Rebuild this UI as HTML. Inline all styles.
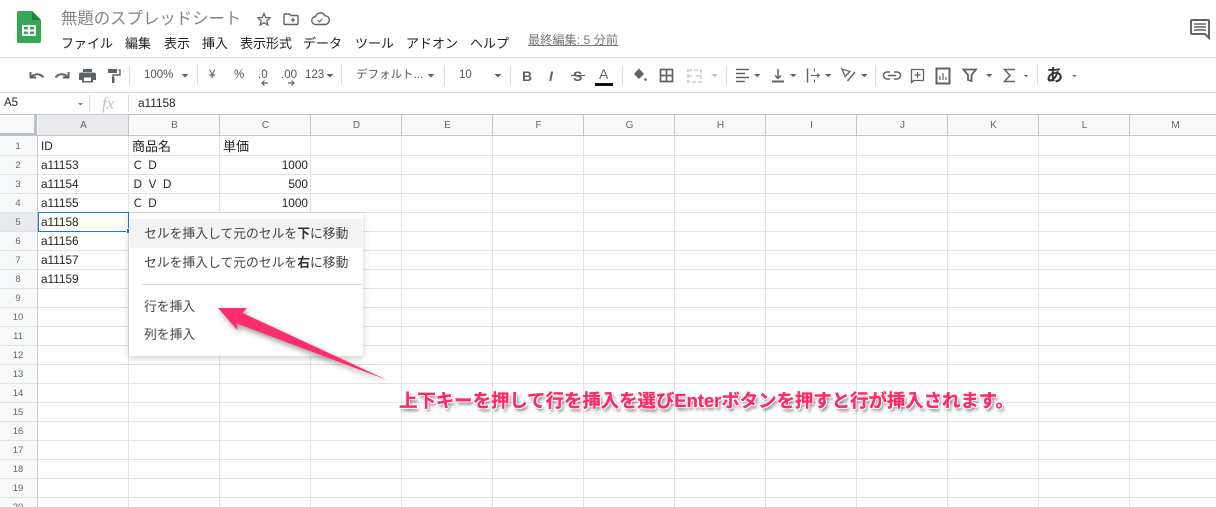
<!DOCTYPE html>
<html lang="ja"><head><meta charset="utf-8"><title>無題のスプレッドシート</title>
<style>
html,body{margin:0;padding:0;background:#fff}
#p{position:relative;width:1216px;height:507px;overflow:hidden;background:#fff;font-family:"Liberation Sans","Noto Sans CJK JP",sans-serif;color:#222}
#p div.t{position:absolute;white-space:nowrap;line-height:1}
svg{position:absolute;left:0;top:0}
.m{font-size:13px;color:#222;top:37px}
.c{font-size:11.8px;color:#222}
.h{font-size:10px;color:#666;width:91px;text-align:center;top:121px}
.r{font-size:9.5px;color:#666;width:36px;left:0;text-align:center}
.tb{font-size:11.5px;color:#555;top:70px}
.mi{font-size:12.8px;color:#444;left:144px}
.mi b{color:#333}
.w{font-size:11.5px !important}
</style></head><body><div id="p">

<svg width="1216" height="507" viewBox="0 0 1216 507" fill="none">
<rect x="0" y="115" width="1216" height="21" fill="#f8f9fa"/>
<rect x="0" y="136" width="37" height="371" fill="#f8f9fa"/>
<rect x="38" y="115" width="90" height="21" fill="#e8eaed"/>
<rect x="0" y="213" width="37" height="18" fill="#e8eaed"/>
<g stroke="#e2e3e3" stroke-width="1">
<path d="M0 155.5H1216M0 174.5H1216M0 193.5H1216M0 212.500H1216M0 231.500H1216M0 250.500H1216M0 269.500H1216M0 288.500H1216M0 307.500H1216M0 326.500H1216M0 345.500H1216M0 364.500H1216M0 383.500H1216M0 402.500H1216M0 421.500H1216M0 440.500H1216M0 459.500H1216M0 478.500H1216M0 497.500H1216"/>
<path d="M128.500 136V507M219.500 136V507M310.500 136V507M401.500 136V507M492.500 136V507M583.500 136V507M674.500 136V507M765.500 136V507M856.500 136V507M947.500 136V507M1038.500 136V507M1129.500 136V507"/>
</g>
<g stroke="#c4c6c8" stroke-width="1">
<path d="M0 114.500H1216M37.500 136V507"/>
<path d="M128.500 115V136M219.500 115V136M310.500 115V136M401.500 115V136M492.500 115V136M583.500 115V136M674.500 115V136M765.500 115V136M856.500 115V136M947.500 115V136M1038.500 115V136M1129.500 115V136"/>
<path d="M0 135.500H1216"/>
</g>
<rect x="34" y="115" width="3" height="21" fill="#bdc1c6"/>
<rect x="0" y="133" width="37" height="3" fill="#bdc1c6"/>
<path d="M0 57.500H1216M0 92.500H1216" stroke="#dadce0"/>
<g stroke="#dadce0"><path d="M129.500 65V85M197.500 65V85M341.500 65V85M444.500 65V85M510.500 65V85M622.500 65V85M726.500 65V85M875.500 65V85M1037.500 65V85M89.500 95V112M128.500 95V112"/></g>
<!-- logo -->
<path d="M18.500 11H32L41 20V41.500a1.500 1.500 0 0 1-1.500 1.500H18.500A1.500 1.500 0 0 1 17 41.500V12.500A1.500 1.500 0 0 1 18.500 11Z" fill="#34a853"/>
<path d="M32 11L41 20H32Z" fill="#1e7e3e"/>
<path d="M22 25H36V36H22ZM24 27V29.500H28V27ZM30 27V29.500H34V27ZM24 31.500V34H28V31.500ZM30 31.500V34H34V31.500Z" fill="#fff" fill-rule="evenodd"/>
<!-- star folder cloud -->
<path d="M264 13.500l1.800 4 4.300.4-3.300 2.900 1 4.200-3.800-2.300-3.800 2.300 1-4.200-3.300-2.900 4.300-.4Z" stroke="#5f6368" stroke-width="1.300"/>
<path d="M285 14h4.500l1.500 1.500h6a1 1 0 0 1 1 1v7a1 1 0 0 1-1 1h-12a1 1 0 0 1-1-1v-8.500a1 1 0 0 1 1-1Z" stroke="#5f6368" stroke-width="1.400"/>
<path d="M291 20h4M293 18v4" stroke="#5f6368" stroke-width="1.300"/>
<path d="M316 24.500a4 4 0 0 1-.5-8 5 5 0 0 1 9.300-.8 4.400 4.400 0 0 1 .2 8.800Z" stroke="#5f6368" stroke-width="1.400"/>
<path d="M317.500 20l2 1.800 2.700-3" stroke="#5f6368" stroke-width="1.100"/>
<!-- comments -->
<path d="M1192 20h16a1 1 0 0 1 1 1v17l-4-4h-13a1 1 0 0 1-1-1V21a1 1 0 0 1 1-1Z" stroke="#5f6368" stroke-width="2"/>
<path d="M1194 24h12M1194 27h12M1194 30h12" stroke="#5f6368" stroke-width="1.500"/>
<!-- undo redo print paint -->
<path d="M30.500 72v5.500H36M31.500 77c3-3.500 8.500-4 12 .5" stroke="#5f6368" stroke-width="2"/>
<path d="M68.500 72v5.500H63M67.500 77c-3-3.500-8.500-4-12 .5" stroke="#5f6368" stroke-width="2"/>
<path d="M83 69h9v3h-9ZM81 72.500h13a2 2 0 0 1 2 2V80h-3v2.500H82V80h-3v-5.500a2 2 0 0 1 2-2Z" fill="#5f6368"/>
<rect x="84" y="77.500" width="7" height="3.500" fill="#fff"/>
<path d="M108 69h9v4h-9ZM112 77h2.500v6H112Z" fill="#5f6368"/>
<path d="M118.500 70h1.500v5h-7v3" stroke="#5f6368" stroke-width="1.400"/>
<!-- carets -->
<g fill="#5f6368">
<path d="M181.500 74h7l-3.500 3.500ZM326.500 74h7l-3.500 3.500ZM427.500 74h7l-3.500 3.500ZM494.500 74h7l-3.500 3.500ZM754 74h6.500l-3.200 3.200ZM790 74h6.500l-3.200 3.200ZM825 74h6.500l-3.200 3.200ZM861 74h6.500l-3.200 3.200ZM986 74h6.500l-3.200 3.200ZM1024 75h4l-2 2.200ZM1072.500 75h4l-2 2.200Z"/>
</g>
<path d="M711 74h7l-3.500 3.500Z" fill="#c4c6c8"/>
<!-- dec arrows -->
<path d="M268 83h-6M264.500 80.500l-2.500 2.500 2.500 2.500" stroke="#5f6368" stroke-width="1.200"/>
<path d="M288 83h6M291.500 80.500l2.500 2.500-2.500 2.500" stroke="#5f6368" stroke-width="1.200"/>
<!-- text color bar -->
<rect x="595" y="83" width="18" height="3" fill="#111"/>
<path d="M571 75.500h14" stroke="#5f6368" stroke-width="1.200"/>
<!-- fill -->
<path d="M639 68.500l5 5.500-5 5-5-5Z" fill="#5f6368"/>
<circle cx="645.500" cy="79.500" r="1.300" fill="#5f6368"/>
<!-- borders -->
<path d="M660.500 69.500h12v12h-12ZM666.500 69.500v12M660.500 75.500h12" stroke="#5f6368" stroke-width="1.700"/>
<!-- merge -->
<path d="M688 76h5M696 76h5M688 70h13v12H688Z" stroke="#c9cbce" stroke-width="1.500" stroke-dasharray="4 2"/>
<!-- align -->
<path d="M736 69.500h13M736 73.500h9M736 77.500h13M736 81.500h9" stroke="#5f6368" stroke-width="1.500"/>
<!-- valign -->
<path d="M772 81.500h12" stroke="#5f6368" stroke-width="2"/><path d="M778 69v9M775 75.500l3 3 3-3" stroke="#5f6368" stroke-width="1.500"/>
<!-- wrap -->
<path d="M807.500 68.500v14" stroke="#5f6368" stroke-width="1.500"/>
<path d="M814.500 68.500v3M814.500 79.500v3" stroke="#5f6368"/>
<path d="M811 75.500h8M817 73.500l2.300 2-2.300 2" stroke="#5f6368" stroke-width="1.100"/>
<!-- rotate -->
<path d="M842 69l8 2.500-5 5Z" stroke="#5f6368" stroke-width="1.300"/>
<path d="M847.500 81l7.500-9" stroke="#5f6368" stroke-width="1.500"/>
<!-- link -->
<path d="M890 72h-3a3.500 3.500 0 0 0 0 7h3M894 72h3a3.500 3.500 0 0 1 0 7h-3M888 75.500h8" stroke="#5f6368" stroke-width="1.500"/>
<!-- comment -->
<path d="M911.500 69.500h12v11h-10l-2 2Z" stroke="#5f6368" stroke-width="1.300"/><path d="M917.500 72v6M914.500 75h6" stroke="#5f6368" stroke-width="1.200"/>
<!-- chart -->
<path d="M936.500 68.500h13v15h-13Z" stroke="#5f6368" stroke-width="2"/><path d="M940 80v-4M943 80v-7M946 80v-3" stroke="#5f6368" stroke-width="1.200"/>
<!-- filter -->
<path d="M963.500 69.500h12.500l-4.500 5.500v6l-3.500-1v-5Z" stroke="#5f6368" stroke-width="1.800"/>
<!-- sigma -->
<path d="M1015 69.500h-10.500l5.500 6-5.500 6H1015" stroke="#5f6368" stroke-width="1.500"/>
<path d="M78 103h5l-2.500 2.500Z" fill="#777"/>
</svg>

<div class="t" style="left:61px;top:11px;font-size:16.4px;color:#80868b">無題のスプレッドシート</div>
<div class="t m" style="left:61px">ファイル</div>
<div class="t m" style="left:125px">編集</div>
<div class="t m" style="left:164px">表示</div>
<div class="t m" style="left:202px">挿入</div>
<div class="t m" style="left:240px">表示形式</div>
<div class="t m" style="left:303px">データ</div>
<div class="t m" style="left:355px">ツール</div>
<div class="t m" style="left:406px">アドオン</div>
<div class="t m" style="left:470px">ヘルプ</div>
<div class="t" style="left:528px;top:34px;font-size:12.2px;color:#777;text-decoration:underline">最終編集: 5 分前</div>

<div class="t tb" style="left:144px">100%</div>
<div class="t tb" style="left:209px">¥</div>
<div class="t tb" style="left:234px">%</div>
<div class="t tb" style="left:258px">.0</div>
<div class="t tb" style="left:281px">.00</div>
<div class="t tb" style="left:305px">123</div>
<div class="t tb" style="left:356px">デフォルト...</div>
<div class="t tb" style="left:459px">10</div>
<div class="t" style="left:522px;top:69px;font-size:14px;font-weight:700;color:#5f6368">B</div>
<div class="t" style="left:549px;top:69px;font-size:14px;font-style:italic;font-weight:700;color:#5f6368">I</div>
<div class="t" style="left:573px;top:69px;font-size:14px;color:#5f6368;font-weight:700">S</div>
<div class="t" style="left:599px;top:67px;font-size:14px;color:#5f6368">A</div>
<div class="t" style="left:1046px;top:67px;font-size:17px;font-weight:700;color:#333">あ</div>

<div class="t" style="left:4px;top:98px;font-size:11.5px;color:#222">A5</div>
<div class="t" style="left:102px;top:95px;font-size:17px;font-family:'Liberation Serif',serif;font-style:italic;color:#bdc1c6">fx</div>
<div class="t" style="left:138px;top:98px;font-size:11.8px;color:#222">a11158</div>

<div class="t h" style="left:38px">A</div><div class="t h" style="left:129px">B</div><div class="t h" style="left:220px">C</div><div class="t h" style="left:311px">D</div><div class="t h" style="left:402px">E</div><div class="t h" style="left:493px">F</div><div class="t h" style="left:584px">G</div><div class="t h" style="left:675px">H</div><div class="t h" style="left:766px">I</div><div class="t h" style="left:857px">J</div><div class="t h" style="left:948px">K</div><div class="t h" style="left:1039px">L</div><div class="t h" style="left:1130px">M</div>

<div class="t r" style="top:142px">1</div><div class="t r" style="top:161px">2</div><div class="t r" style="top:180px">3</div><div class="t r" style="top:199px">4</div><div class="t r" style="top:218px">5</div><div class="t r" style="top:237px">6</div><div class="t r" style="top:256px">7</div><div class="t r" style="top:275px">8</div><div class="t r" style="top:294px">9</div><div class="t r" style="top:313px">10</div><div class="t r" style="top:332px">11</div><div class="t r" style="top:351px">12</div><div class="t r" style="top:370px">13</div><div class="t r" style="top:389px">14</div><div class="t r" style="top:408px">15</div><div class="t r" style="top:427px">16</div><div class="t r" style="top:446px">17</div><div class="t r" style="top:465px">18</div><div class="t r" style="top:484px">19</div><div class="t r" style="top:503px">20</div>

<div class="t c" style="left:41px;top:141px">ID</div><div class="t c" style="left:132px;top:140px;font-size:13px">商品名</div><div class="t c" style="left:223px;top:140px;font-size:13px">単価</div>
<div class="t c" style="left:41px;top:160px">a11153</div><div class="t c w" style="left:132px;top:161px">Ｃ Ｄ</div><div class="t c" style="right:908px;top:160px">1000</div>
<div class="t c" style="left:41px;top:179px">a11154</div><div class="t c w" style="left:132px;top:180px">Ｄ Ｖ Ｄ</div><div class="t c" style="right:908px;top:179px">500</div>
<div class="t c" style="left:41px;top:198px">a11155</div><div class="t c w" style="left:132px;top:199px">Ｃ Ｄ</div><div class="t c" style="right:908px;top:198px">1000</div>
<div class="t c" style="left:41px;top:217px">a11158</div>
<div class="t c" style="left:41px;top:236px">a11156</div>
<div class="t c" style="left:41px;top:255px">a11157</div>
<div class="t c" style="left:41px;top:274px">a11159</div>

<div style="position:absolute;left:38px;top:212px;width:89px;height:18px;border:1px solid #1a73e8"></div>
<div style="position:absolute;left:126px;top:228px;width:4px;height:4px;background:#1a73e8;border:1px solid #fff"></div>

<div style="position:absolute;left:129px;top:213px;width:234px;height:143px;background:#fff;border-radius:3px;box-shadow:0 2px 6px 1px rgba(60,64,67,.2)"></div>
<div style="position:absolute;left:130px;top:219px;width:232px;height:29px;background:#f1f3f4"></div>
<div style="position:absolute;left:142px;top:284px;width:220px;height:1px;background:#dadce0"></div>
<div class="t mi" style="top:228px">セルを挿入して元のセルを<b>下</b>に移動</div>
<div class="t mi" style="top:257px">セルを挿入して元のセルを<b>右</b>に移動</div>
<div class="t mi" style="top:301px">行を挿入</div>
<div class="t mi" style="top:329px">列を挿入</div>

<svg width="1216" height="507" viewBox="0 0 1216 507" style="filter:drop-shadow(2px 3px 3px rgba(0,0,0,.4))">
<path d="M218 308L247 308L242.500 313L387 380L237 323.500L237.300 330Z" fill="#ff2d6b"/>
</svg>

<div class="t" style="left:399px;top:392px;font-size:18.4px;font-weight:700;color:#fc2b68;-webkit-text-stroke:.3px #fc2b68;text-shadow:-1px -1px 0 #fff,1px -1px 0 #fff,-1px 1px 0 #fff,1px 1px 0 #fff,0 -1px 0 #fff,0 1px 0 #fff,-1px 0 0 #fff,1px 0 0 #fff,2px 3px 3px rgba(0,0,0,.55)">上下キーを押して行を挿入を選びEnterボタンを押すと行が挿入されます。</div>
</div></body></html>
